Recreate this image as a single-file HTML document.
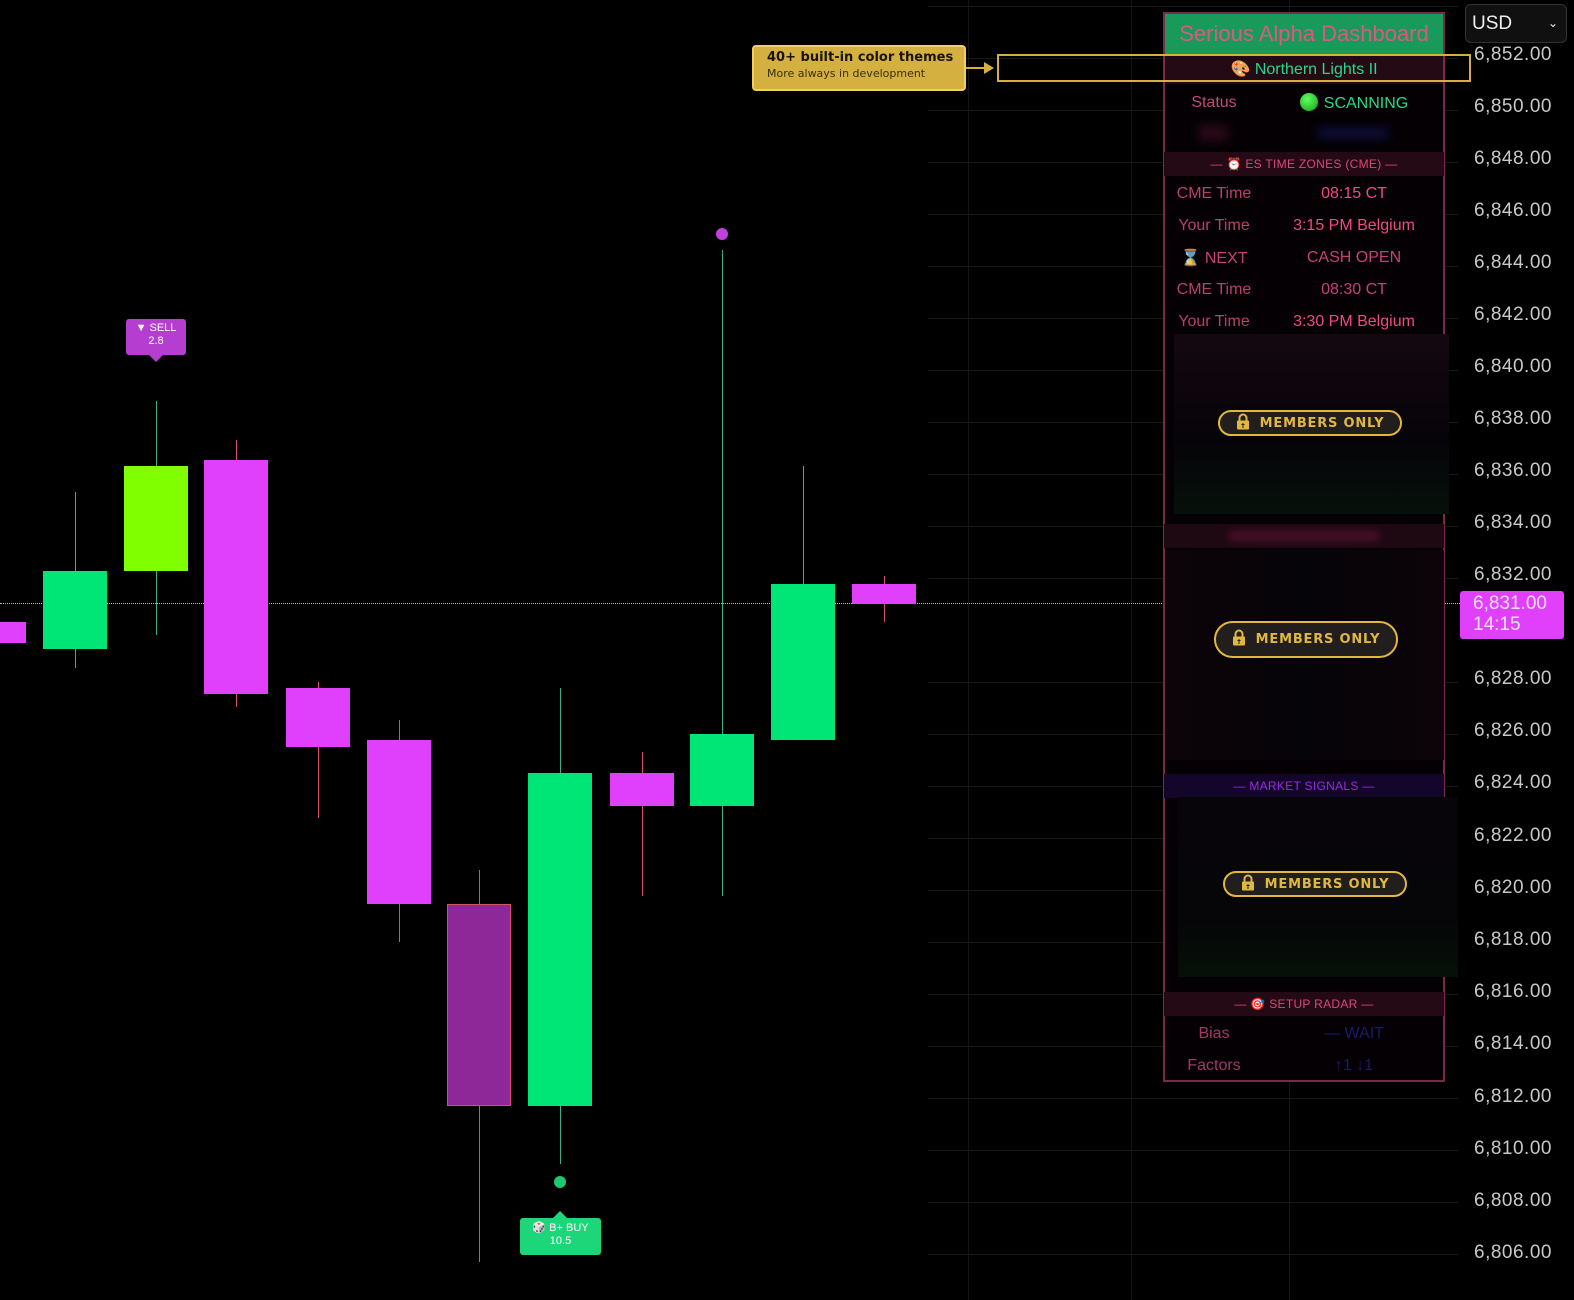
<!DOCTYPE html>
<html><head><meta charset="utf-8">
<style>
*{margin:0;padding:0;box-sizing:border-box}
body{width:1574px;height:1300px;background:#000;position:relative;overflow:hidden;font-family:"Liberation Sans","DejaVu Sans",sans-serif}
.a{position:absolute}
.w{position:absolute;width:1px}
.b{position:absolute;width:64px}
.g{background:#00e676}.m{background:#e040fb}
.wg{background:#3fae8a}.wm{background:#d8506a}
.hl{position:absolute;left:928px;width:530px;height:1px;background:#181818}
.vl{position:absolute;top:0;width:1px;height:1300px;background:#141414}
.pl{position:absolute;left:1474px;color:#c9c9c9;font-size:19px;letter-spacing:.5px}
.row{position:absolute;left:1164px;width:280px;height:32px;font-size:16px;display:flex;align-items:center}
.row .k{width:100px;text-align:center}
.row .v{flex:1;text-align:center}
.sec{position:absolute;left:1164px;width:280px;height:24px;font-size:12px;display:flex;align-items:center;justify-content:center;letter-spacing:.3px}
.lock{position:absolute;background:#0a060a}
.mo{position:absolute;height:26px;border:2px solid #e0b840;border-radius:14px;background:#221e1e;color:#e0b840;font-weight:bold;font-size:14px;letter-spacing:.8px;display:flex;align-items:center;justify-content:center;font-family:"DejaVu Sans",sans-serif}
.mo svg{margin-right:10px;position:relative;top:-2px}
</style></head><body>
<div class="vl" style="left:968px"></div><div class="vl" style="left:1131px"></div><div class="vl" style="left:1289px"></div>
<div class="hl" style="top:6px"></div><div class="hl" style="top:58px"></div><div class="hl" style="top:110px"></div><div class="hl" style="top:162px"></div><div class="hl" style="top:214px"></div><div class="hl" style="top:266px"></div><div class="hl" style="top:318px"></div><div class="hl" style="top:370px"></div><div class="hl" style="top:422px"></div><div class="hl" style="top:474px"></div><div class="hl" style="top:526px"></div><div class="hl" style="top:578px"></div><div class="hl" style="top:682px"></div><div class="hl" style="top:734px"></div><div class="hl" style="top:786px"></div><div class="hl" style="top:838px"></div><div class="hl" style="top:890px"></div><div class="hl" style="top:942px"></div><div class="hl" style="top:994px"></div><div class="hl" style="top:1046px"></div><div class="hl" style="top:1098px"></div><div class="hl" style="top:1150px"></div><div class="hl" style="top:1202px"></div><div class="hl" style="top:1254px"></div>

<div class="a" style="left:0;top:603px;width:1460px;border-top:1px dotted #d8a0e0"></div>

<div class="b m" style="left:0;top:622px;width:26px;height:21px"></div>
<div class="w wg" style="left:75px;top:492px;height:176px"></div><div class="b g" style="left:43px;top:571px;height:78px"></div>
<div class="w wg" style="left:156px;top:401px;height:234px"></div><div class="b" style="left:124px;top:466px;height:105px;background:#7fff00"></div>
<div class="w wm" style="left:236px;top:440px;height:267px"></div><div class="b m" style="left:204px;top:460px;height:234px"></div>
<div class="w wm" style="left:318px;top:682px;height:136px"></div><div class="b m" style="left:286px;top:688px;height:59px"></div>
<div class="w wm" style="left:399px;top:720px;height:222px"></div><div class="b m" style="left:367px;top:740px;height:164px"></div>
<div class="w wm" style="left:479px;top:870px;height:392px"></div><div class="b" style="left:447px;top:904px;height:202px;background:#8e2898;border:1px solid #d8506a"></div>
<div class="w wg" style="left:560px;top:688px;height:476px"></div><div class="b g" style="left:528px;top:773px;height:333px"></div>
<div class="w wm" style="left:642px;top:752px;height:144px"></div><div class="b m" style="left:610px;top:773px;height:33px"></div>
<div class="w wg" style="left:722px;top:250px;height:646px"></div><div class="b g" style="left:690px;top:734px;height:72px"></div>
<div class="w wg" style="left:803px;top:466px;height:274px"></div><div class="b g" style="left:771px;top:584px;height:156px"></div>
<div class="w wm" style="left:884px;top:576px;height:46px"></div><div class="b m" style="left:852px;top:584px;height:20px"></div>

<div class="a" style="left:716px;top:228px;width:12px;height:12px;border-radius:50%;background:#c040e0"></div>
<div class="a" style="left:554px;top:1176px;width:12px;height:12px;border-radius:50%;background:#1ec870"></div>

<div class="a" style="left:126px;top:319px;width:60px;height:36px;background:#b53ed0;border-radius:3px;color:#fff;font-size:11px;text-align:center;line-height:13px;padding-top:3px">▼ SELL<br>2.8</div>
<div class="a" style="left:149px;top:355px;border:7px solid transparent;border-top-color:#b53ed0;border-bottom:0"></div>
<div class="a" style="left:553px;top:1211px;border:7px solid transparent;border-bottom-color:#1ed67a;border-top:0"></div>
<div class="a" style="left:520px;top:1218px;width:81px;height:37px;background:#1ed67a;border-radius:3px;color:#fff;font-size:11px;text-align:center;line-height:13px;padding-top:4px">🎲 B+ BUY<br>10.5</div>

<div class="a" style="left:752px;top:45px;width:214px;height:46px;background:#d4b040;border:2px solid #f0d060;border-radius:4px;padding:3px 0 0 13px;font-family:'DejaVu Sans',sans-serif;color:#1a1408">
<div style="font-weight:bold;font-size:13px">40+ built-in color themes</div><div style="font-size:11px;margin-top:2px;color:#3a2e10">More always in development</div></div>
<div class="a" style="left:966px;top:67px;width:20px;height:2px;background:#d4b040"></div>
<div class="a" style="left:984px;top:62px;border:6px solid transparent;border-left:10px solid #d4b040;border-right:0"></div>

<div class="a" style="left:1163px;top:12px;width:282px;height:1070px;border:2px solid #7a2a48;background:#040004"></div>
<div class="a" style="left:1165px;top:14px;width:278px;height:40px;background:#1a9a5a;color:#d85a80;font-size:22px;text-align:center;line-height:40px">Serious Alpha Dashboard</div>
<div class="a" style="left:1165px;top:56px;width:278px;height:28px;background:#240a14;color:#28d888;font-size:16px;text-align:center;line-height:28px">🎨 Northern Lights II</div>
<div class="a" style="left:997px;top:54px;width:474px;height:28px;border:2px solid #d4b040"></div>
<div class="row" style="top:87px;color:#c04a78"><span class="k">Status</span><span class="v" style="color:#28d888"><span style="display:inline-block;width:18px;height:18px;border-radius:50%;background:radial-gradient(circle at 40% 35%,#60ff60,#10a010);vertical-align:-3px;margin-right:6px"></span>SCANNING</span></div>
<div class="a" style="left:1198px;top:125px;width:30px;height:16px;background:#2a0a18;filter:blur(5px)"></div>
<div class="a" style="left:1318px;top:128px;width:70px;height:10px;background:#101040;filter:blur(5px)"></div>
<div class="sec" style="top:152px;background:#240a14;color:#d84a7a">— ⏰ ES TIME ZONES (CME) —</div>
<div class="row" style="top:178px;color:#b8406a"><span class="k">CME Time</span><span class="v" style="color:#f04a82">08:15 CT</span></div>
<div class="row" style="top:210px;color:#b8406a"><span class="k">Your Time</span><span class="v" style="color:#f04a82">3:15 PM Belgium</span></div>
<div class="row" style="top:242px;color:#c8407a"><span class="k">⌛ NEXT</span><span class="v" style="color:#c8407a">CASH OPEN</span></div>
<div class="row" style="top:274px;color:#b8406a"><span class="k">CME Time</span><span class="v" style="color:#c8407a">08:30 CT</span></div>
<div class="row" style="top:306px;color:#b8406a"><span class="k">Your Time</span><span class="v" style="color:#f04a82">3:30 PM Belgium</span></div>

<div class="lock" style="left:1174px;top:334px;width:275px;height:180px;background:linear-gradient(180deg,#140810,#060408 60%,#06100a)"></div>
<div class="mo" style="left:1218px;top:410px;width:184px;font-size:13px"><svg width="14" height="17" viewBox="0 0 14 17"><path d="M3.5 8V5a3.5 3.5 0 0 1 7 0v3" fill="none" stroke="#e0b840" stroke-width="2"/><rect x="1" y="7.5" width="12" height="9" rx="1" fill="#e0b840"/><path d="M7 10v5M5.5 11.5h3" stroke="#221e1e" stroke-width="1"/></svg>MEMBERS ONLY</div>
<div class="sec" style="top:524px;background:#1e0812"><span style="display:block;width:150px;height:10px;background:#4a1028;filter:blur(4px)"></span></div>
<div class="lock" style="left:1166px;top:550px;width:278px;height:210px;background:linear-gradient(90deg,#0c0408,#050408 50%,#0c0408)"></div>
<div class="mo" style="left:1214px;top:621px;width:184px;height:37px;border-radius:19px;font-size:13px"><svg width="14" height="17" viewBox="0 0 14 17"><path d="M3.5 8V5a3.5 3.5 0 0 1 7 0v3" fill="none" stroke="#e0b840" stroke-width="2"/><rect x="1" y="7.5" width="12" height="9" rx="1" fill="#e0b840"/><path d="M7 10v5M5.5 11.5h3" stroke="#221e1e" stroke-width="1"/></svg>MEMBERS ONLY</div>
<div class="sec" style="top:774px;background:#14062a;color:#9a2ae0">— MARKET SIGNALS —</div>
<div class="lock" style="left:1178px;top:797px;width:280px;height:180px;background:linear-gradient(180deg,#07040a,#060608 70%,#061008)"></div>
<div class="mo" style="left:1223px;top:871px;width:184px;font-size:13px"><svg width="14" height="17" viewBox="0 0 14 17"><path d="M3.5 8V5a3.5 3.5 0 0 1 7 0v3" fill="none" stroke="#e0b840" stroke-width="2"/><rect x="1" y="7.5" width="12" height="9" rx="1" fill="#e0b840"/><path d="M7 10v5M5.5 11.5h3" stroke="#221e1e" stroke-width="1"/></svg>MEMBERS ONLY</div>
<div class="sec" style="top:992px;background:#240a14;color:#d84a7a">— 🎯 SETUP RADAR —</div>
<div class="row" style="top:1018px;color:#a03a66"><span class="k">Bias</span><span class="v" style="color:#1a1a6a">— WAIT</span></div>
<div class="row" style="top:1050px;color:#a03a66"><span class="k">Factors</span><span class="v" style="color:#1a1a6a">↑1 ↓1</span></div>

<div class="a" style="left:1465px;top:4px;width:102px;height:39px;background:#101010;border:1px solid #333;border-radius:6px;color:#eee;font-size:19px;line-height:37px;padding-left:6px">USD<span style="position:absolute;right:8px;font-size:12px">⌄</span></div>
<div class="pl" style="top:44px">6,852.00</div><div class="pl" style="top:96px">6,850.00</div><div class="pl" style="top:148px">6,848.00</div><div class="pl" style="top:200px">6,846.00</div><div class="pl" style="top:252px">6,844.00</div><div class="pl" style="top:304px">6,842.00</div><div class="pl" style="top:356px">6,840.00</div><div class="pl" style="top:408px">6,838.00</div><div class="pl" style="top:460px">6,836.00</div><div class="pl" style="top:512px">6,834.00</div><div class="pl" style="top:564px">6,832.00</div><div class="pl" style="top:668px">6,828.00</div><div class="pl" style="top:720px">6,826.00</div><div class="pl" style="top:772px">6,824.00</div><div class="pl" style="top:825px">6,822.00</div><div class="pl" style="top:877px">6,820.00</div><div class="pl" style="top:929px">6,818.00</div><div class="pl" style="top:981px">6,816.00</div><div class="pl" style="top:1033px">6,814.00</div><div class="pl" style="top:1086px">6,812.00</div><div class="pl" style="top:1138px">6,810.00</div><div class="pl" style="top:1190px">6,808.00</div><div class="pl" style="top:1242px">6,806.00</div>
<div class="a" style="left:1460px;top:591px;width:104px;height:48px;background:#e040fb;border-radius:3px;color:#f4e0f8;font-size:19px;line-height:21px;padding:2px 0 0 13px">6,831.00<br>14:15</div>
</body></html>
